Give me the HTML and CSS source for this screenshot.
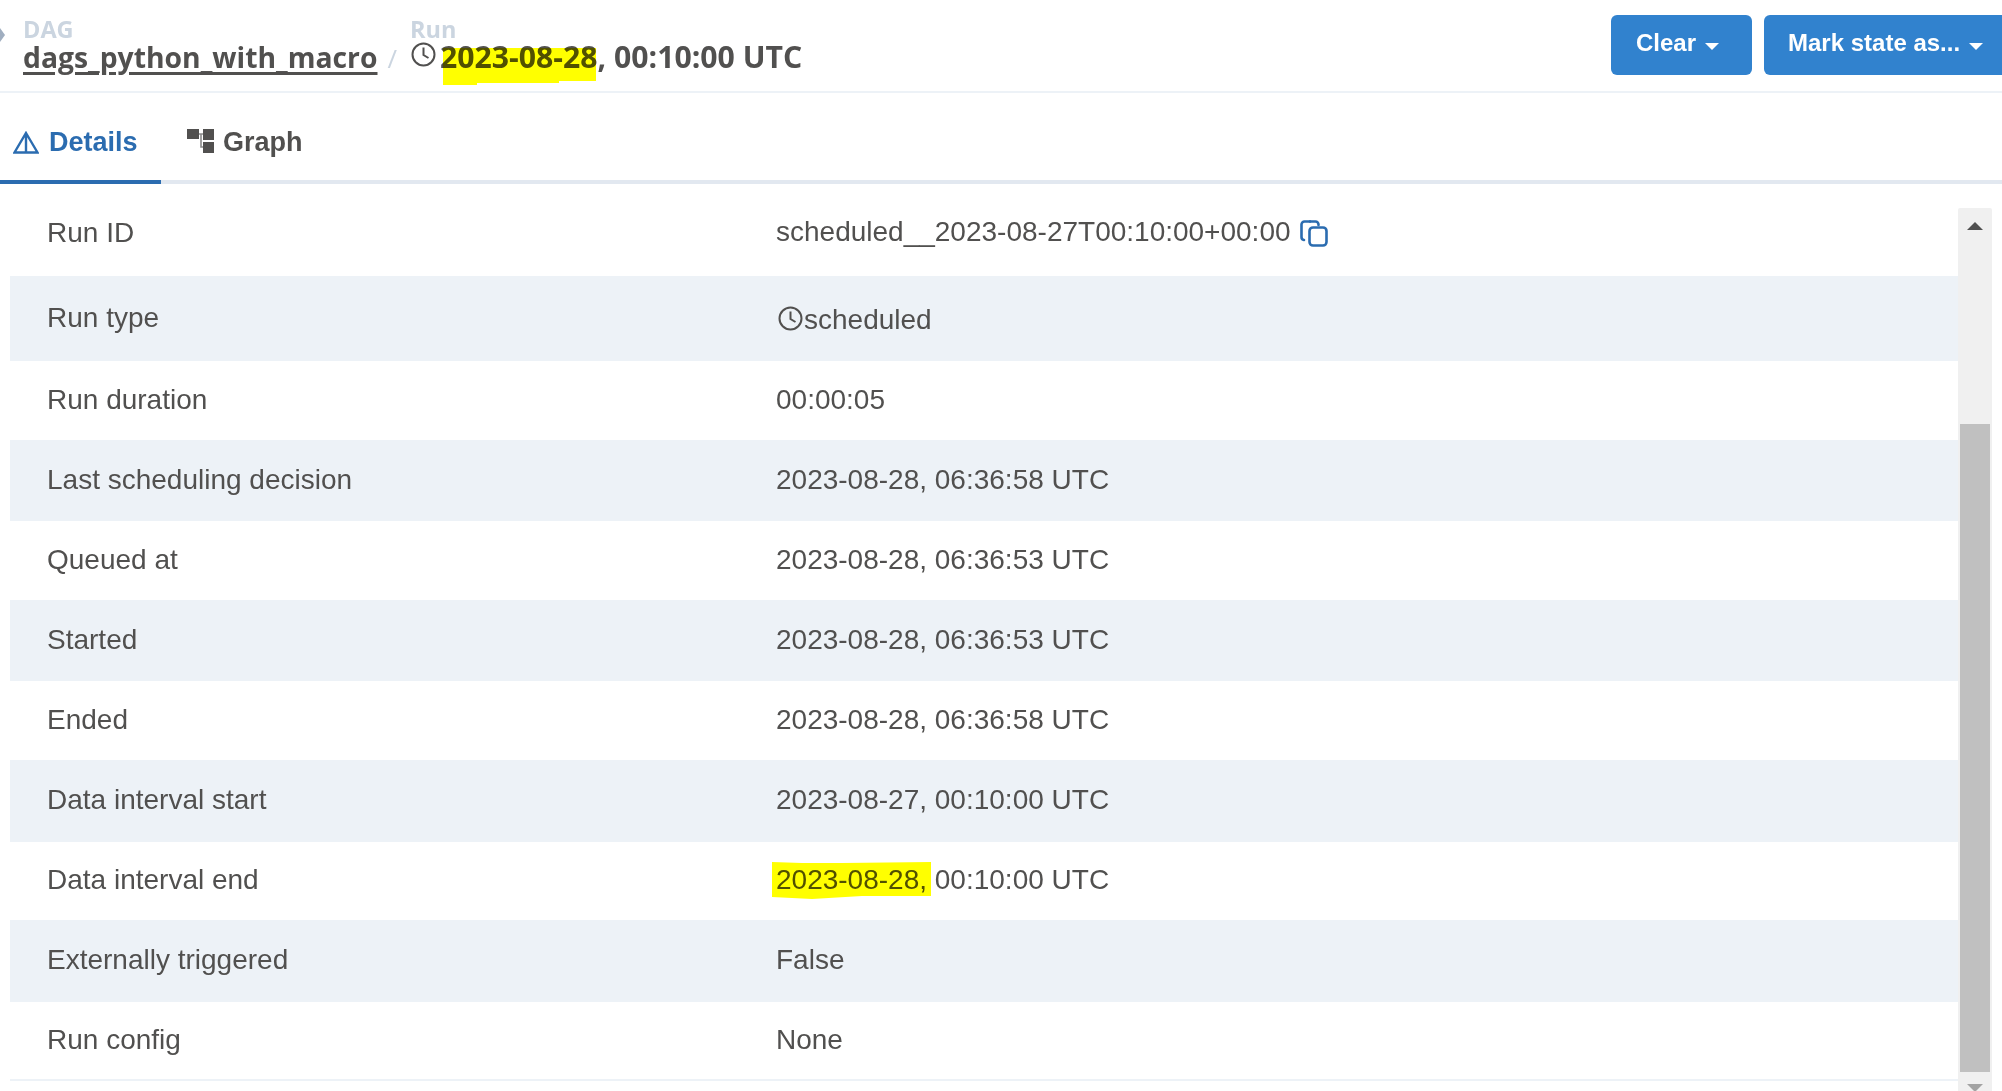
FILE: index.html
```html
<!DOCTYPE html>
<html lang="en">
<head>
<meta charset="utf-8">
<title>DAG run details</title>
<link rel="stylesheet" href="styles.css">
</head>
<body>
<svg class="edge-marker" width="5" height="14" viewBox="0 0 5 14"><polygon points="0,0 5,7 0,14" fill="#a0aec0"/></svg>
<header class="topbar">
  <nav class="crumbs">
    <div class="crumb">
      <span class="crumb-label">DAG</span>
      <a class="crumb-link" href="#">dags_python_with_macro</a>
    </div>
    <span class="crumb-sep">/</span>
    <div class="crumb crumb-run">
      <span class="crumb-label">Run</span>
      <span class="crumb-value">
        <svg class="clock clock-head" viewBox="0 0 25 25"><circle cx="12.5" cy="12.5" r="11" fill="none" stroke="#51504f" stroke-width="2"/><path d="M12.5 5.5v7.5l5 3" fill="none" stroke="#51504f" stroke-width="2"/></svg><span class="hl-wrap">2023-08-28<svg class="hl hl-head" viewBox="0 0 153 37" preserveAspectRatio="none"><polygon points="0,0 153,0 153,33 116,33 116,35 34,35 34,37 0,37"/></svg></span>, 00:10:00 UTC
      </span>
    </div>
  </nav>
  <div class="actions">
    <button class="btn btn-clear">Clear<i class="caret"></i></button>
    <button class="btn btn-mark">Mark state as...<i class="caret"></i></button>
  </div>
</header>
<div class="tabs">
  <a class="tab tab-active" href="#">
    <svg class="tab-icon" width="26" height="23" viewBox="0 0 26 23"><path d="M13 2 L24.5 21.5 H1.5 Z M13 2 V21.5" fill="none" stroke="#2b6cb0" stroke-width="2.4"/></svg>Details
  </a>
  <a class="tab" href="#">
    <svg class="tab-icon tab-icon-graph" width="27" height="24" viewBox="0 0 27 24"><g fill="#51504f"><rect x="0" y="0" width="12" height="10"/><rect x="16" y="0" width="11" height="11"/><rect x="16" y="13" width="11" height="11"/></g><path d="M12 5H16M14 5V18H16" fill="none" stroke="#8a8a8a" stroke-width="1.6"/></svg>Graph
  </a>
</div>
<main class="content">
  <table class="details">
    <tbody>
      <tr><th>Run ID</th><td><span class="runid">scheduled__2023-08-27T00:10:00+00:00</span><svg class="copy" width="28" height="28" viewBox="0 0 28 28"><path d="M10 2.5H4.5a3 3 0 0 0-3 3V18a3 3 0 0 0 2.500 3" fill="none" stroke="#2b6cb0" stroke-width="2.6" stroke-linecap="round"/><path d="M10 2.500H15.500a3 3 0 0 1 3 3V6" fill="none" stroke="#2b6cb0" stroke-width="2.6" stroke-linecap="round"/><rect x="9.500" y="8.500" width="17" height="18" rx="3.500" fill="none" stroke="#2b6cb0" stroke-width="2.600"/></svg></td></tr>
      <tr><th>Run type</th><td class="typed"><svg class="clock clock-row" viewBox="0 0 25 25"><circle cx="12.500" cy="12.500" r="11" fill="none" stroke="#51504f" stroke-width="2"/><path d="M12.500 5.500v7.500l5 3" fill="none" stroke="#51504f" stroke-width="2"/></svg><span>scheduled</span></td></tr>
      <tr><th>Run duration</th><td>00:00:05</td></tr>
      <tr><th>Last scheduling decision</th><td>2023-08-28, 06:36:58 UTC</td></tr>
      <tr><th>Queued at</th><td>2023-08-28, 06:36:53 UTC</td></tr>
      <tr><th>Started</th><td>2023-08-28, 06:36:53 UTC</td></tr>
      <tr><th>Ended</th><td>2023-08-28, 06:36:58 UTC</td></tr>
      <tr><th>Data interval start</th><td>2023-08-27, 00:10:00 UTC</td></tr>
      <tr><th>Data interval end</th><td><span class="hl-wrap">2023-08-28,<svg class="hl hl-row" viewBox="0 0 159 37" preserveAspectRatio="none"><polygon points="0,0 30,1 70,1 159,0 159,34 90,34 40,37 0,35"/></svg></span> 00:10:00 UTC</td></tr>
      <tr><th>Externally triggered</th><td>False</td></tr>
      <tr><th>Run config</th><td>None</td></tr>
    </tbody>
  </table>
  <aside class="scrollbar">
    <span class="arrow arrow-up"></span>
    <span class="thumb"></span>
    <span class="arrow arrow-down"></span>
  </aside>
</main>
</body>
</html>
```
FILE: styles.css
```css
html, body { margin: 0; padding: 0; height: 100%; background: #fff; overflow: hidden; }
body { font-family: "Liberation Sans", Arial, sans-serif; color: #51504f; position: relative; }
.edge-marker { position: absolute; left: 0; top: 28px; }
.topbar { display: flex; justify-content: space-between; height: 91px; border-bottom: 2px solid #edf2f7; box-sizing: content-box; }
.crumbs { display: flex; align-items: flex-start; padding: 19px 0 0 23px; font-family: "Open Sans", sans-serif; }
.crumb { display: flex; flex-direction: column; }
.crumb-label { font-size: 23.5px; line-height: 21px; font-weight: 700; color: #cbd5e0; }
.crumb-link { font-size: 28.3px; line-height: 34px; font-weight: 700; color: #51504f; text-decoration: underline; text-underline-offset: 4px; text-decoration-thickness: 3px; }
.crumb-sep { font-size: 26px; color: #cbd5e0; margin: 21px 13px 0 10px; line-height: 36px; }
.crumb-value { font-size: 30.2px; line-height: 34px; font-weight: 700; display: flex; align-items: flex-start; white-space: pre; }
.clock { display: block; flex: none; }
.clock-head { width: 25px; height: 25px; margin: 2px 4px 0 1px; }
.hl-wrap { position: relative; display: inline-block; }
.hl { position: absolute; fill: #ffff00; mix-blend-mode: multiply; pointer-events: none; }
.hl-head { left: 3px; top: 8px; width: 153px; height: 37px; }
.hl-row { left: -4px; top: -2px; width: 159px; height: 37px; }
.actions { display: flex; gap: 12px; padding-top: 15px; align-items: flex-start; }
.btn { height: 60px; border: 0; background: #3182ce; color: #fff; font: bold 24px/55px "Liberation Sans", Arial, sans-serif; display: flex; align-items: flex-start; border-radius: 6px; }
.btn-clear { width: 141px; padding: 0 0 0 25px; }
.btn-mark { width: 238px; padding: 0 0 0 24px; border-radius: 6px 0 0 6px; }
.caret { width: 0; height: 0; border-left: 7px solid transparent; border-right: 7px solid transparent; border-top: 7px solid #fff; margin: 28px 0 0 9px; }
.tabs { display: flex; height: 87px; border-bottom: 4px solid #e2e8f0; }
.tab { display: flex; align-items: center; height: 87px; box-sizing: border-box; padding: 12px 0 0 26px; font-size: 27px; font-weight: bold; color: #51504f; text-decoration: none; width: 235px; }
.tab-icon { margin-right: 9px; flex: none; }
.tab-icon-graph { margin-top: -3px; }
.tab-active { height: 91px; width: 161px; padding: 12px 0 0 13px; color: #2b6cb0; border-bottom: 4px solid #2b6cb0; }
.tab-active .tab-icon { margin-right: 10px; }
.content { display: flex; padding: 4px 10px 0 10px; align-items: flex-start; }
.details { width: 1948px; table-layout: fixed; border-collapse: collapse; font-size: 28px; }
.details th, .details td { padding: 0 0 2px; text-align: left; font-weight: normal; vertical-align: middle; }
.details th { width: 766px; padding-left: 37px; box-sizing: border-box; }
.details tr:nth-child(even) { background: #edf2f7; }
.details tr:nth-child(1) { height: 88px; }
.details tr:nth-child(1) th { padding-bottom: 0; padding-top: 2px; }
.details tr:nth-child(1) .runid { position: relative; top: 1px; }
.details tr:nth-child(2) { height: 85px; }
.details tr:nth-child(3), .details tr:nth-child(5), .details tr:nth-child(7) { height: 79px; }
.details tr:nth-child(4), .details tr:nth-child(6) { height: 81px; }
.details tr:nth-child(8), .details tr:nth-child(10) { height: 82px; }
.details tr:nth-child(9), .details tr:nth-child(11) { height: 78px; }
.details tr:last-child { border-bottom: 2px solid #edf2f7; }
.copy { vertical-align: middle; margin-left: 9px; }
.typed span { display: inline-block; padding-top: 7px; }
.clock-row { display: inline-block; width: 25px; height: 25px; margin: 0 1px 7px 2px; vertical-align: middle; }
.scrollbar { width: 34px; height: 883px; margin-top: 20px; background: #f0f0f0; position: relative; flex: none; box-sizing: border-box; display: flex; flex-direction: column; align-items: center; border-radius: 2px 2px 0 0; }
.thumb { width: 30px; height: 648px; margin-top: 194px; background: #c0c0c0; flex: none; }
.arrow { width: 0; height: 0; border-left: 8px solid transparent; border-right: 8px solid transparent; flex: none; }
.arrow-up { border-bottom: 8px solid #505050; margin-top: 14px; }
.arrow-down { border-top: 8px solid #a3a3a3; margin-top: 12px; }
```
